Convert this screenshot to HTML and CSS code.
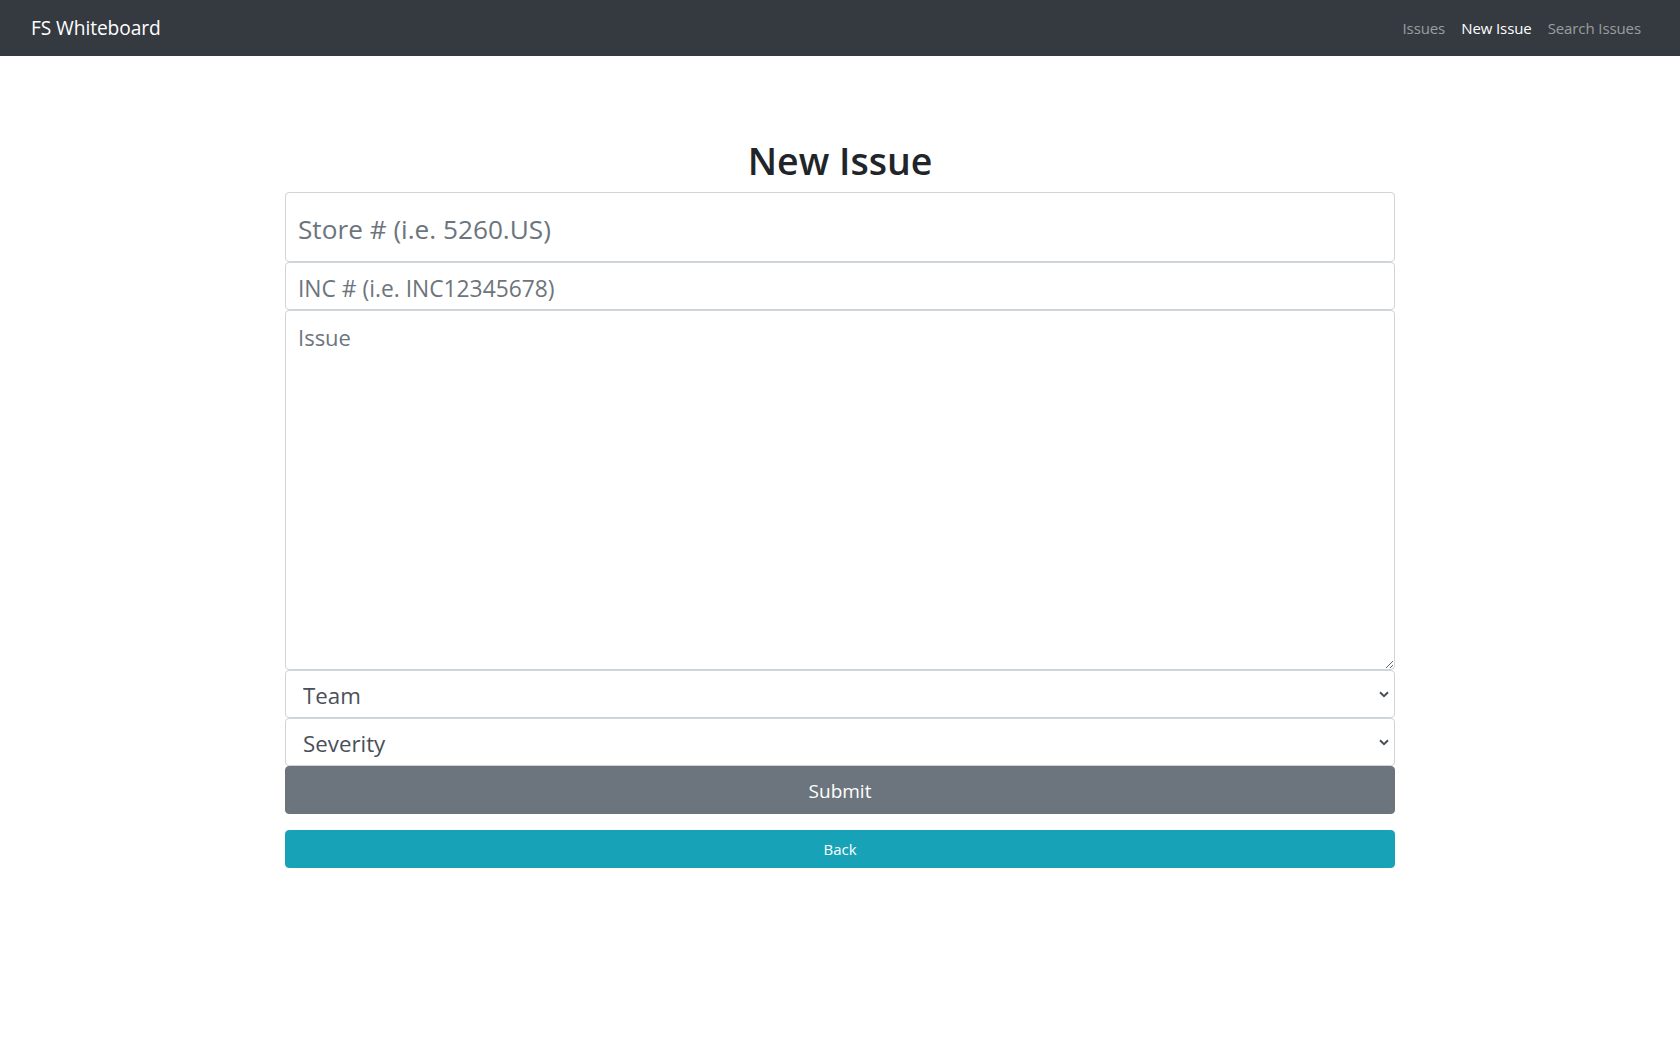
FILE: index.html
```html
<!DOCTYPE html>
<html lang="en">
<head>
<meta charset="utf-8">
<title>FS Whiteboard - New Issue</title>
<link rel="stylesheet" href="styles.css">
</head>
<body>
<nav class="navbar">
  <div class="navbar-inner">
    <a class="brand" href="#">FS Whiteboard</a>
    <ul class="nav">
      <li><a class="nav-link" href="#">Issues</a></li>
      <li><a class="nav-link active" href="#">New Issue</a></li>
      <li><a class="nav-link" href="#">Search Issues</a></li>
    </ul>
  </div>
</nav>
<main class="container">
  <h1 class="title">New Issue</h1>
  <form class="issue-form">
    <input class="field field-store" type="text" placeholder="Store # (i.e. 5260.US)">
    <input class="field field-inc" type="text" placeholder="INC # (i.e. INC12345678)">
    <textarea class="field field-issue" placeholder="Issue"></textarea>
    <div class="select-wrap">
      <select class="field field-select">
        <option>Team</option>
      </select>
      <svg class="chevron" width="10" height="7" viewBox="0 0 10 7"><polyline points="1,1.2 5,5.2 9,1.2" fill="none" stroke="#495057" stroke-width="2"/></svg>
    </div>
    <div class="select-wrap">
      <select class="field field-select">
        <option>Severity</option>
      </select>
      <svg class="chevron" width="10" height="7" viewBox="0 0 10 7"><polyline points="1,1.2 5,5.2 9,1.2" fill="none" stroke="#495057" stroke-width="2"/></svg>
    </div>
    <button class="btn btn-submit" type="button">Submit</button>
    <button class="btn btn-back" type="button">Back</button>
  </form>
</main>
</body>
</html>
```
FILE: styles.css
```css
* { box-sizing: border-box; }

html, body {
  margin: 0;
  padding: 0;
  background: #fff;
  font-family: "Open Sans", "Noto Sans", sans-serif;
  color: #212529;
}

.navbar {
  background: #343a40;
  height: 56px;
  padding: 8px 16px;
}

.navbar-inner {
  display: flex;
  align-items: center;
  justify-content: space-between;
  height: 40px;
  padding: 0 15px;
}

.brand {
  color: #fff;
  text-decoration: none;
  font-size: 19.2px;
  line-height: 30px;
  letter-spacing: -0.1px;
}

.nav {
  display: flex;
  list-style: none;
  margin: 0;
  padding: 0;
}

.nav-link {
  display: block;
  padding: 0 8px;
  font-size: 15px;
  line-height: 24px;
  color: rgba(255, 255, 255, 0.5);
  text-decoration: none;
  letter-spacing: -0.1px;
}

.nav-link.active {
  color: #fff;
}

.container {
  width: 1110px;
  margin: 0 auto;
  padding-top: 81px;
}

.title {
  margin: 0 0 7px;
  text-align: center;
  font-size: 37.5px;
  line-height: 48px;
  font-weight: 600;
  color: #212529;
}

.issue-form {
  display: flex;
  flex-direction: column;
}

.field {
  display: block;
  width: 100%;
  margin: 0;
  border: 1px solid #ced4da;
  border-radius: 4px;
  background: #fff;
  font-family: "Open Sans", "Noto Sans", sans-serif;
  color: #495057;
  outline: none;
}

.field::placeholder {
  color: #6c757d;
  opacity: 1;
}

.field-store {
  height: 70px;
  padding: 4px 12px 0;
  font-size: 26.2px;
}

.field-inc {
  height: 48px;
  padding: 4px 12px 0;
  font-size: 22.8px;
}

.field-issue {
  height: 360px;
  padding: 10px 12px 8px;
  font-size: 22px;
  line-height: 1.5;
  resize: vertical;
}

.select-wrap {
  position: relative;
}

.field-select {
  height: 48px;
  padding: 2px 30px 0 17px;
  font-size: 22.3px;
  color: #495057;
  appearance: none;
  -webkit-appearance: none;
}

.chevron {
  position: absolute;
  right: 6px;
  top: 21px;
  pointer-events: none;
}

.btn {
  display: block;
  width: 100%;
  border: 1px solid transparent;
  border-radius: 4px;
  color: #fff;
  font-family: "Open Sans", "Noto Sans", sans-serif;
  text-align: center;
  cursor: pointer;
}

.btn-submit {
  height: 48px;
  padding-top: 2px;
  background: #6c757d;
  border-color: #6c757d;
  font-size: 19px;
}

.btn-back {
  height: 38px;
  margin-top: 16px;
  background: #17a2b8;
  border-color: #17a2b8;
  font-size: 15px;
}
```
